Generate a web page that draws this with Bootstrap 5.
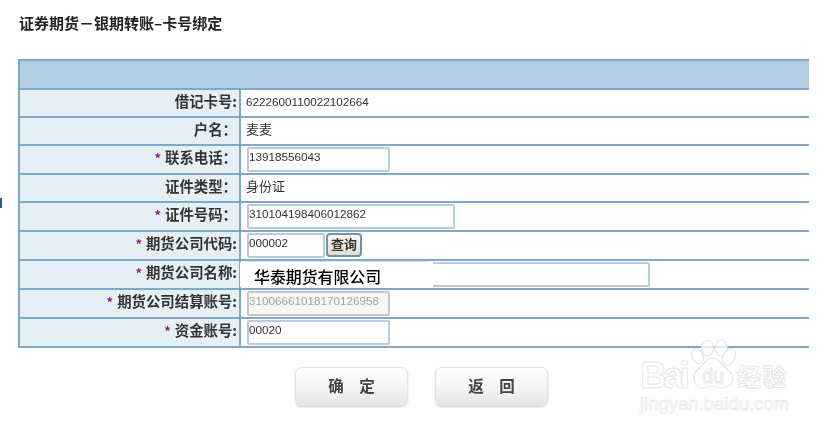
<!DOCTYPE html>
<html lang="zh">
<head>
<meta charset="utf-8">
<title>卡号绑定</title>
<link href="https://cdn.jsdelivr.net/npm/bootstrap@5.3.0/dist/css/bootstrap.min.css" rel="stylesheet">
<style>
html,body{background:#fff;overflow:hidden;height:429px}
body{font-family:"Liberation Sans","Noto Sans CJK SC",sans-serif;color:#2b2b2b;position:relative}
.shot{width:835px;height:429px;padding-left:18px;filter:blur(.35px)}
.ttl{font:700 15px/20px "Noto Sans CJK SC",sans-serif;color:#222;margin:0;padding:13px 0 0 1px;height:59px}
.grid-tb{width:791px;table-layout:fixed;border-collapse:collapse;border:2px solid #7fa8c9;border-right:0}
.grid-tb td,.grid-tb th{border:0;border-top:2px solid #7fa8c9;padding:0;vertical-align:middle}
.col-l{width:221px}
.grid-tb td.lbl{background:#e6eef6;text-align:right;border-right:2px solid #7fa8c9;font:700 14.4px/16px "Noto Sans CJK SC",sans-serif;color:#333;padding:0 2px 5px 0}
.grid-tb td.val{padding:0 0 1px 6px;font:11.7px/16px "Liberation Sans","Noto Sans CJK SC",sans-serif;color:#333}
.grid-tb td.txtv{padding:0 0 3px 5px}
.grid-tb td.cjkv{font:13px/16px "Noto Sans CJK SC",sans-serif;padding:0 0 4px 5px}
.grid-tb th.hd{height:29px;background:#b0cde3;border-top:0}
.r28{height:28px}.r29{height:29px}
.star{color:#8b1a8b;font-size:13px;margin-right:4px}
.fld{display:block;height:25px;border:2px solid #b7cbdd;border-radius:2px;padding:0 0 5px 0;font:11.7px/16px "Liberation Sans",sans-serif;color:#333;background:#fff;outline:0}
.w143{width:143px}.w208{width:208px}.w78{width:78px}.w403{width:403px}
.fld:disabled{background:#f7f7f3;color:#a3a3a3;border-color:#c4c8c8}
.qbtn{width:36px;height:24px;padding:0 0 2px;border:2px solid #6f93b3;border-radius:4px;background:linear-gradient(#fbf9f0,#e2ddcc);font:700 13px/16px "Noto Sans CJK SC",sans-serif;color:#333;margin-left:1px}
.namewrap{position:relative;width:403px}
.patch{position:absolute;left:-7px;top:0;width:193px;height:25px;background:#fff;font:500 15.9px/30px "Noto Sans CJK SC",sans-serif;color:#000;padding-left:14px;white-space:nowrap}
.tint{position:absolute;left:0;top:-1px;width:183px;height:3px;background:#d5e6ea}
.acts{padding:19px 0 0 277px}
.abtn{width:113px;height:39px;padding:0 0 3px;border:1px solid #e2e2e2;border-radius:7px;background:linear-gradient(#fff,#f6f6f6 45%,#e6e6e6);box-shadow:0 1px 2px #ccc;font:700 15.5px/20px "Noto Sans CJK SC",sans-serif;color:#444;white-space:pre}
.abtn+.abtn{margin-left:27px}
.edge{position:absolute;left:0;top:198px;width:2px;height:10px;background:#2c5a9c}
.wm{position:absolute;left:630px;top:335px;width:170px;height:85px;pointer-events:none}
.wm text{fill:#fff;fill-opacity:.6;stroke:#e6e6e6;stroke-width:.9px}
.wm .big{font:700 37px "Liberation Sans",sans-serif}
.wm .cn{font:700 24px "Noto Sans CJK SC",sans-serif}
.wm .url{font:400 18.5px "Liberation Sans",sans-serif;stroke-width:.7px}
.wm .du{font:400 20px "Liberation Sans",sans-serif}
.wm .pw{fill:#fff;fill-opacity:.75;stroke:#e6e6e6;stroke-width:1.2}
</style>
</head>
<body>
<div class="edge"></div>
<div class="shot">
  <h1 class="ttl">证券期货－银期转账–卡号绑定</h1>
  <table class="grid-tb">
    <colgroup><col class="col-l"><col></colgroup>
    <tr><th colspan="2" class="hd"></th></tr>
    <tr class="r28"><td class="lbl">借记卡号:</td><td class="val txtv">6222600110022102664</td></tr>
    <tr class="r28"><td class="lbl">户名：</td><td class="val cjkv">麦麦</td></tr>
    <tr class="r29"><td class="lbl"><span class="star">*</span>联系电话：</td><td class="val"><input class="fld w143" value="13918556043"></td></tr>
    <tr class="r28"><td class="lbl">证件类型：</td><td class="val cjkv">身份证</td></tr>
    <tr class="r29"><td class="lbl"><span class="star">*</span>证件号码：</td><td class="val"><input class="fld w208" value="310104198406012862"></td></tr>
    <tr class="r29"><td class="lbl"><span class="star">*</span>期货公司代码:</td><td class="val"><div class="d-flex align-items-start"><input class="fld w78" value="000002"><button class="qbtn" type="button">查询</button></div></td></tr>
    <tr class="r29"><td class="lbl"><span class="star">*</span>期货公司名称:</td><td class="val"><div class="namewrap"><input class="fld w403"><div class="tint"></div><div class="patch">华泰期货有限公司</div></div></td></tr>
    <tr class="r29"><td class="lbl"><span class="star">*</span>期货公司结算账号:</td><td class="val"><input class="fld w143" disabled value="31006661018170126958"></td></tr>
    <tr class="r29"><td class="lbl"><span class="star">*</span>资金账号:</td><td class="val"><input class="fld w143" value="00020"></td></tr>
  </table>
  <div class="acts d-flex">
    <button class="btn abtn" type="button">确　定</button>
    <button class="btn abtn" type="button">返　回</button>
  </div>
</div>
<svg class="wm" viewBox="0 0 170 85" aria-hidden="true">
  <text class="big" x="10" y="53" textLength="50">Bai</text>
  <ellipse class="pw" cx="77.5" cy="13" rx="6" ry="8"/>
  <ellipse class="pw" cx="91" cy="13" rx="6" ry="8"/>
  <ellipse class="pw" cx="67.5" cy="21" rx="5.5" ry="8" transform="rotate(-25 67.5 21)"/>
  <ellipse class="pw" cx="99" cy="22" rx="6" ry="8.5" transform="rotate(25 99 22)"/>
  <path class="pw" d="M64 42c0-7 7-9 11-15 4-5 11-5 15 0 4 6 12 8 13 16 0 7-6 10-12 10-4 0-7-2-9-2s-5 2-9 2c-6 0-9-5-9-11z"/>
  <text class="du" x="72" y="48">du</text>
  <text class="cn" x="107" y="51" textLength="50">经验</text>
  <text class="url" x="10" y="75" textLength="149">jingyan.baidu.com</text>
</svg>
<script src="https://cdn.jsdelivr.net/npm/bootstrap@5.3.0/dist/js/bootstrap.bundle.min.js"></script>
</body>
</html>
